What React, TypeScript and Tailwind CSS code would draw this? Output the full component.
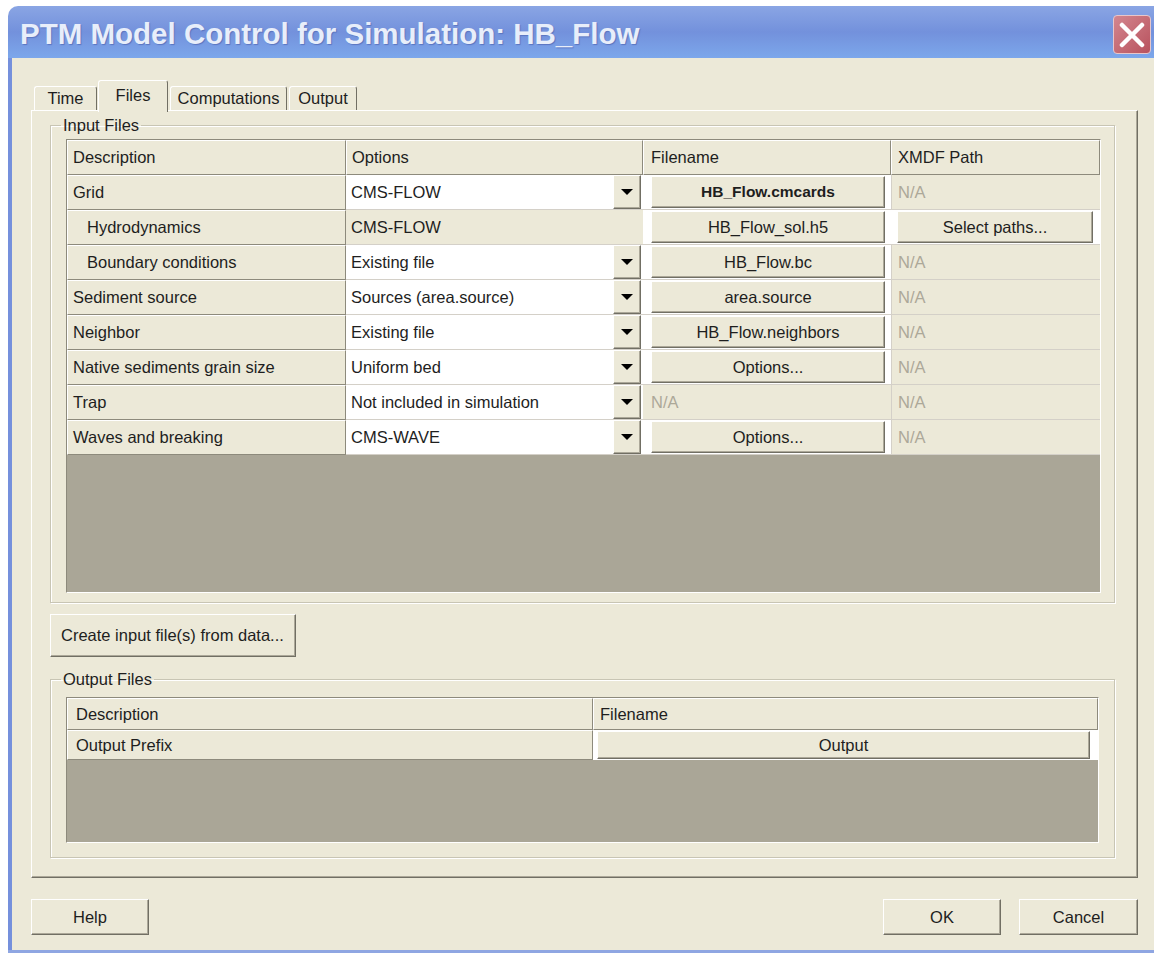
import type { ReactNode } from "react"

// classic raised 3D edge used by buttons, headers and row labels
const raised =
  "border border-t-white border-l-white border-r-[#716f64] border-b-[#716f64] shadow-[inset_-1px_-1px_0_#aca899]"
const headerEdge =
  "border border-t-white border-l-white border-r-[#8d8a7c] border-b-[#8d8a7c]"
const sunken =
  "border border-t-[#8d8a7c] border-l-[#8d8a7c] border-r-white border-b-white"

type Cell =
  | { kind: "button"; text: string; bold?: boolean }
  | { kind: "na" }

interface InputRow {
  desc: string
  indent?: boolean
  option: string
  drop: boolean
  file: Cell
  xmdf: Cell
}

const inputRows: InputRow[] = [
  { desc: "Grid", option: "CMS-FLOW", drop: true, file: { kind: "button", text: "HB_Flow.cmcards", bold: true }, xmdf: { kind: "na" } },
  { desc: "Hydrodynamics", indent: true, option: "CMS-FLOW", drop: false, file: { kind: "button", text: "HB_Flow_sol.h5" }, xmdf: { kind: "button", text: "Select paths..." } },
  { desc: "Boundary conditions", indent: true, option: "Existing file", drop: true, file: { kind: "button", text: "HB_Flow.bc" }, xmdf: { kind: "na" } },
  { desc: "Sediment source", option: "Sources (area.source)", drop: true, file: { kind: "button", text: "area.source" }, xmdf: { kind: "na" } },
  { desc: "Neighbor", option: "Existing file", drop: true, file: { kind: "button", text: "HB_Flow.neighbors" }, xmdf: { kind: "na" } },
  { desc: "Native sediments grain size", option: "Uniform bed", drop: true, file: { kind: "button", text: "Options..." }, xmdf: { kind: "na" } },
  { desc: "Trap", option: "Not included in simulation", drop: true, file: { kind: "na" }, xmdf: { kind: "na" } },
  { desc: "Waves and breaking", option: "CMS-WAVE", drop: true, file: { kind: "button", text: "Options..." }, xmdf: { kind: "na" } },
]

function Btn({ children, className = "", bold = false }: { children: ReactNode; className?: string; bold?: boolean }) {
  return (
    <button
      type="button"
      className={`flex items-center justify-center bg-[#ece9d8] text-[#1e1e1e] ${raised} ${bold ? "text-[15.5px] font-bold" : "text-[16.5px]"} ${className}`}
    >
      {children}
    </button>
  )
}

function DropArrow() {
  return (
    <span className={`flex w-[28px] items-center justify-center bg-[#ece9d8] ${raised}`}>
      <svg width="12" height="6" viewBox="0 0 12 6">
        <path d="M0 0h12L6 6z" fill="#000" />
      </svg>
    </span>
  )
}

function Tab({ label, selected = false, className = "" }: { label: string; selected?: boolean; className?: string }) {
  return (
    <div
      className={`flex items-center justify-center rounded-t-[3px] bg-[#ece9d8] border-t border-l border-r border-t-white border-l-white border-r-[#716f64] ${
        selected ? "relative z-10 -mb-[2px] h-[32px] self-start pb-[3px]" : "h-[24px]"
      } ${className}`}
    >
      {label}
    </div>
  )
}

function GroupBox({ title, children, className = "" }: { title: string; children: ReactNode; className?: string }) {
  return (
    <fieldset className={`border border-[#c8c5b4] shadow-[1px_1px_0_white,inset_1px_1px_0_white] ${className}`}>
      <legend className="ml-[10px] px-[2px] text-[16.5px] leading-[18px]">{title}</legend>
      {children}
    </fieldset>
  )
}

function FileCell({ cell }: { cell: Cell }) {
  if (cell.kind === "na") {
    return (
      <div className="flex items-center border-b border-[#d4d0c8] bg-[#ece9d8] pl-[8px] text-[#aca899]">N/A</div>
    )
  }
  return (
    <div className="flex border-b border-[#d4d0c8] bg-white py-[1px] pl-[8px] pr-[6px]">
      <Btn className="flex-1" bold={cell.bold}>
        {cell.text}
      </Btn>
    </div>
  )
}

function XmdfCell({ cell }: { cell: Cell }) {
  if (cell.kind === "na") {
    return (
      <div className="flex items-center border-b border-l border-[#d4d0c8] bg-[#ece9d8] pl-[6px] text-[#aca899]">N/A</div>
    )
  }
  return (
    <div className="flex border-b border-[#d4d0c8] bg-white py-[1px] pl-[6px] pr-[7px]">
      <Btn className="flex-1">{cell.text}</Btn>
    </div>
  )
}

function InputTable() {
  return (
    <div className={`flex h-[454px] w-[1035px] flex-col ${sunken}`}>
      <div className="grid auto-rows-[35px] grid-cols-[279px_297px_248px_209px]">
        <div className={`flex items-center bg-[#ece9d8] pl-[5px] ${headerEdge}`}>Description</div>
        <div className={`flex items-center bg-[#ece9d8] pl-[5px] ${headerEdge}`}>Options</div>
        <div className={`flex items-center bg-[#ece9d8] pl-[7px] ${headerEdge}`}>Filename</div>
        <div className={`flex items-center bg-[#ece9d8] pl-[6px] ${headerEdge}`}>XMDF Path</div>

        {inputRows.map((row) => (
          <div key={row.desc} className="contents">
            <div className={`flex items-center bg-[#ece9d8] ${row.indent ? "pl-[19px]" : "pl-[5px]"} ${headerEdge}`}>
              {row.desc}
            </div>
            {row.drop ? (
              <div className="flex border-b border-[#d4d0c8] bg-white pr-[2px]">
                <span className="flex flex-1 items-center pl-[5px]">{row.option}</span>
                <DropArrow />
              </div>
            ) : (
              <div className="flex items-center border-b border-[#d4d0c8] bg-[#ece9d8] pl-[5px]">{row.option}</div>
            )}
            <FileCell cell={row.file} />
            <XmdfCell cell={row.xmdf} />
          </div>
        ))}
      </div>
      <div className="flex-1 bg-[#aaa697]" />
    </div>
  )
}

function OutputTable() {
  return (
    <div className={`flex h-[146px] w-[1033px] flex-col ${sunken}`}>
      <div className="grid grid-cols-[526px_505px] grid-rows-[32px_30px]">
        <div className={`flex items-center bg-[#ece9d8] pl-[8px] ${headerEdge}`}>Description</div>
        <div className={`flex items-center bg-[#ece9d8] pl-[6px] ${headerEdge}`}>Filename</div>
        <div className={`flex items-center bg-[#ece9d8] pl-[8px] ${headerEdge}`}>Output Prefix</div>
        <div className="flex bg-white py-[1px] pl-[4px] pr-[8px]">
          <Btn className="flex-1">Output</Btn>
        </div>
      </div>
      <div className="flex-1 bg-[#aaa697]" />
    </div>
  )
}

export default function App() {
  return (
    <div className="h-[953px] w-[1154px] overflow-hidden bg-white pl-[8px] pt-[6px] font-['Liberation_Sans',Arial,sans-serif] text-[16.5px] text-[#1e1e1e]">
      <div className="flex w-[1146px] flex-col border-b-[3px] border-[#8fa6e2]">
        {/* title bar */}
        <div className="flex h-[52px] items-center rounded-tl-[10px] bg-linear-to-b from-[#8aa5e4] via-[#7391dc] to-[#7ca7eb] pl-[12px] pr-[3px]">
          <span className="flex-1 pt-[4px] text-[29.5px] font-bold text-[#e8eefa] [text-shadow:1px_1px_1px_#5a75c0]">
            PTM Model Control for Simulation: HB_Flow
          </span>
          <span className="mt-[5px] flex h-[39px] w-[38px] items-center justify-center rounded-[4px] border border-[#e7c6ca] bg-linear-to-br from-[#d3868f] to-[#b8525e]">
            <svg width="26" height="26" viewBox="0 0 26 26">
              <path d="M3 3L23 23M23 3L3 23" stroke="#fff" strokeWidth="4.5" strokeLinecap="round" />
            </svg>
          </span>
        </div>

        {/* dialog body */}
        <div className="flex h-[892px] flex-col border-l-[4px] border-[#7590dc] bg-[#ece9d8] pl-[19px] pt-[22px]">
          <div className="flex h-[30px] items-end pl-[3px]">
            <Tab label="Time" className="w-[63px]" />
            <Tab label="Files" selected className="ml-[1px] w-[70px]" />
            <Tab label="Computations" className="ml-[2px] w-[117px]" />
            <Tab label="Output" className="ml-[2px] w-[68px]" />
          </div>

          <div className="flex h-[768px] w-[1107px] flex-col border border-t-white border-l-white border-r-[#716f64] border-b-[#716f64] pl-[18px] pt-[5px] shadow-[inset_-1px_-1px_0_#aca899]">
            <GroupBox title="Input Files" className="w-[1065px]">
              <div className="pb-[9px] pl-[15px] pt-[5px]">
                <InputTable />
              </div>
            </GroupBox>

            <Btn className="mt-[11px] h-[43px] w-[246px] justify-start! pl-[10px]">Create input file(s) from data...</Btn>

            <GroupBox title="Output Files" className="mt-[13px] w-[1065px]">
              <div className="pb-[14px] pl-[15px] pt-[9px]">
                <OutputTable />
              </div>
            </GroupBox>
          </div>

          <div className="mt-[21px] flex w-[1107px] items-center">
            <Btn className="h-[36px] w-[118px]">Help</Btn>
            <div className="flex-1" />
            <Btn className="h-[36px] w-[118px]">OK</Btn>
            <Btn className="ml-[18px] h-[36px] w-[119px]">Cancel</Btn>
          </div>
        </div>
      </div>
    </div>
  )
}
